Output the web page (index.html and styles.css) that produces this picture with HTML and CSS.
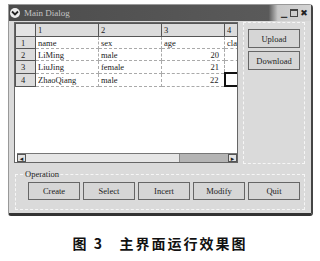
FILE: index.html
```html
<!DOCTYPE html>
<html lang="en">
<head>
    <meta charset="UTF-8">
    <title>Main Dialog</title>
    <link rel="stylesheet" href="styles.css">
</head>
<body>
    <div class="window">
        <div class="titlebar">
            <span class="menu-icon">
                <svg width="10" height="10" viewBox="0 0 10 10"><circle cx="5" cy="5" r="5" fill="#eee"/><path d="M2 3.5 L5 6.5 L8 3.5" stroke="#222" stroke-width="1.8" fill="none"/></svg>
            </span>
            <span class="title">Main Dialog</span>
            <span class="controls">
                <span class="ctl">&#x2581;</span>
                <span class="ctl box"></span>
                <span class="ctl x">&#x2716;</span>
            </span>
        </div>
        <div class="top">
            <div class="grid-box">
                <table class="grid">
                    <tr class="head">
                        <th class="corner"></th><th>1</th><th>2</th><th>3</th><th>4</th>
                    </tr>
                    <tr><th>1</th><td>name</td><td>sex</td><td>age</td><td>clas</td></tr>
                    <tr><th>2</th><td>LiMing</td><td>male</td><td class="num">20</td><td></td></tr>
                    <tr><th>3</th><td>LiuJing</td><td>female</td><td class="num">21</td><td></td></tr>
                    <tr><th>4</th><td>ZhaoQiang</td><td>male</td><td class="num">22</td><td class="current"></td></tr>
                </table>
                <div class="empty"></div>
                <div class="hscroll">
                    <span class="arrow">&#x25C2;</span>
                    <span class="track"></span>
                    <span class="trough"></span>
                    <span class="arrow">&#x25B8;</span>
                </div>
            </div>
            <div class="side">
                <button>Upload</button>
                <button>Download</button>
            </div>
        </div>
        <div class="group-label">Operation</div>
        <div class="group">
            <button>Create</button>
            <button>Select</button>
            <button>Incert</button>
            <button>Modify</button>
            <button>Quit</button>
        </div>
    </div>
    <p class="caption">图 3&nbsp;&nbsp;&nbsp;主界面运行效果图</p>
</body>
</html>
```

FILE: styles.css
```css
body { margin: 0; background: #fff; font-family: "Liberation Serif", serif; color: #222; }
.window { box-sizing: border-box; width: 305px; height: 212px; margin: 4px 0 0 8px; background: #dadada; border: 1px solid #999; border-right: 2px solid #444; border-bottom: 3px solid #333; border-radius: 0 4px 3px 3px; }
.titlebar { height: 16px; display: flex; align-items: center; background: linear-gradient(to right, #4c4c4c 0, #5a5a5a 86%, #c8c8c8 89%, #d4d4d4 100%); }
.menu-icon { display: flex; margin: 0 4px 0 1px; }
.title { font-size: 9px; color: #c4c4c4; flex: 1; }
.controls { display: flex; gap: 2px; margin-right: 3px; align-items: center; }
.ctl { width: 8px; height: 9px; font-size: 8px; line-height: 9px; text-align: center; color: #333; font-family: "DejaVu Sans", sans-serif; }
.ctl.box { box-sizing: border-box; width: 8px; height: 8px; border: 1px solid #444; border-top-width: 2px; }
.ctl.x { font-size: 9px; color: #222; }
.top { display: flex; padding: 1px 0 0 5px; }
.grid-box { width: 224px; height: 141px; background: #fff; border: 1px solid #666; box-sizing: border-box; display: flex; flex-direction: column; overflow: hidden; }
.grid { border-collapse: collapse; table-layout: fixed; width: 240px; font-size: 8.5px; }
.grid th, .grid td { height: 11px; padding: 0 2px; text-align: left; font-weight: normal; white-space: nowrap; overflow: hidden; }
.grid th { background: #dcdcdc; border: 1px solid #555; }
.grid td { border: 1px dashed #aaa; }
.grid th:nth-child(1) { width: 12px; padding-left: 5px; }
.grid th:nth-child(2), .grid th:nth-child(3), .grid th:nth-child(4) { width: 58px; }
.grid .head th { height: 12px; }
.grid .corner { background: #e4e4e4; }
.grid td.num { text-align: right; padding-right: 5px; }
.grid td.current { border: 2px solid #111; }
.empty { flex: 1; }
.hscroll { height: 8px; display: flex; background: #bcbcbc; border-top: 1px solid #777; margin: 0 0 0 2px; }
.arrow { width: 9px; font-size: 7px; line-height: 8px; text-align: center; background: #e2e2e2; border: 1px solid #555; box-sizing: border-box; font-family: "DejaVu Sans", sans-serif; }
.track { width: 153px; background: #e6e6e6; border-right: 1px solid #888; }
.trough { flex: 1; background: #b4b4b4; }
.side { box-sizing: border-box; width: 62px; height: 142px; margin-left: 5px; border: 1px dashed #f6f6f6; display: flex; flex-direction: column; align-items: center; gap: 3px; padding-top: 6px; }
button { font-family: "Liberation Serif", serif; font-size: 8.5px; color: #222; background: #d6d6d6; border: 1px solid #666; border-radius: 0; padding: 0; }
.side button { width: 52px; height: 19px; }
.group-label { font-size: 8.5px; margin: 5px 0 0 16px; line-height: 10px; }
.group { box-sizing: border-box; margin: -5px 6px 0 6px; height: 36px; border: 1px dashed #f6f6f6; display: flex; gap: 3px; padding: 7px 0 0 12px; }
.group button { width: 52px; height: 18px; }
.caption { margin: 17px 0 0 0; text-align: center; font-family: "Noto Sans CJK SC", sans-serif; font-weight: bold; font-size: 14px; letter-spacing: 2px; color: #111; }
```
